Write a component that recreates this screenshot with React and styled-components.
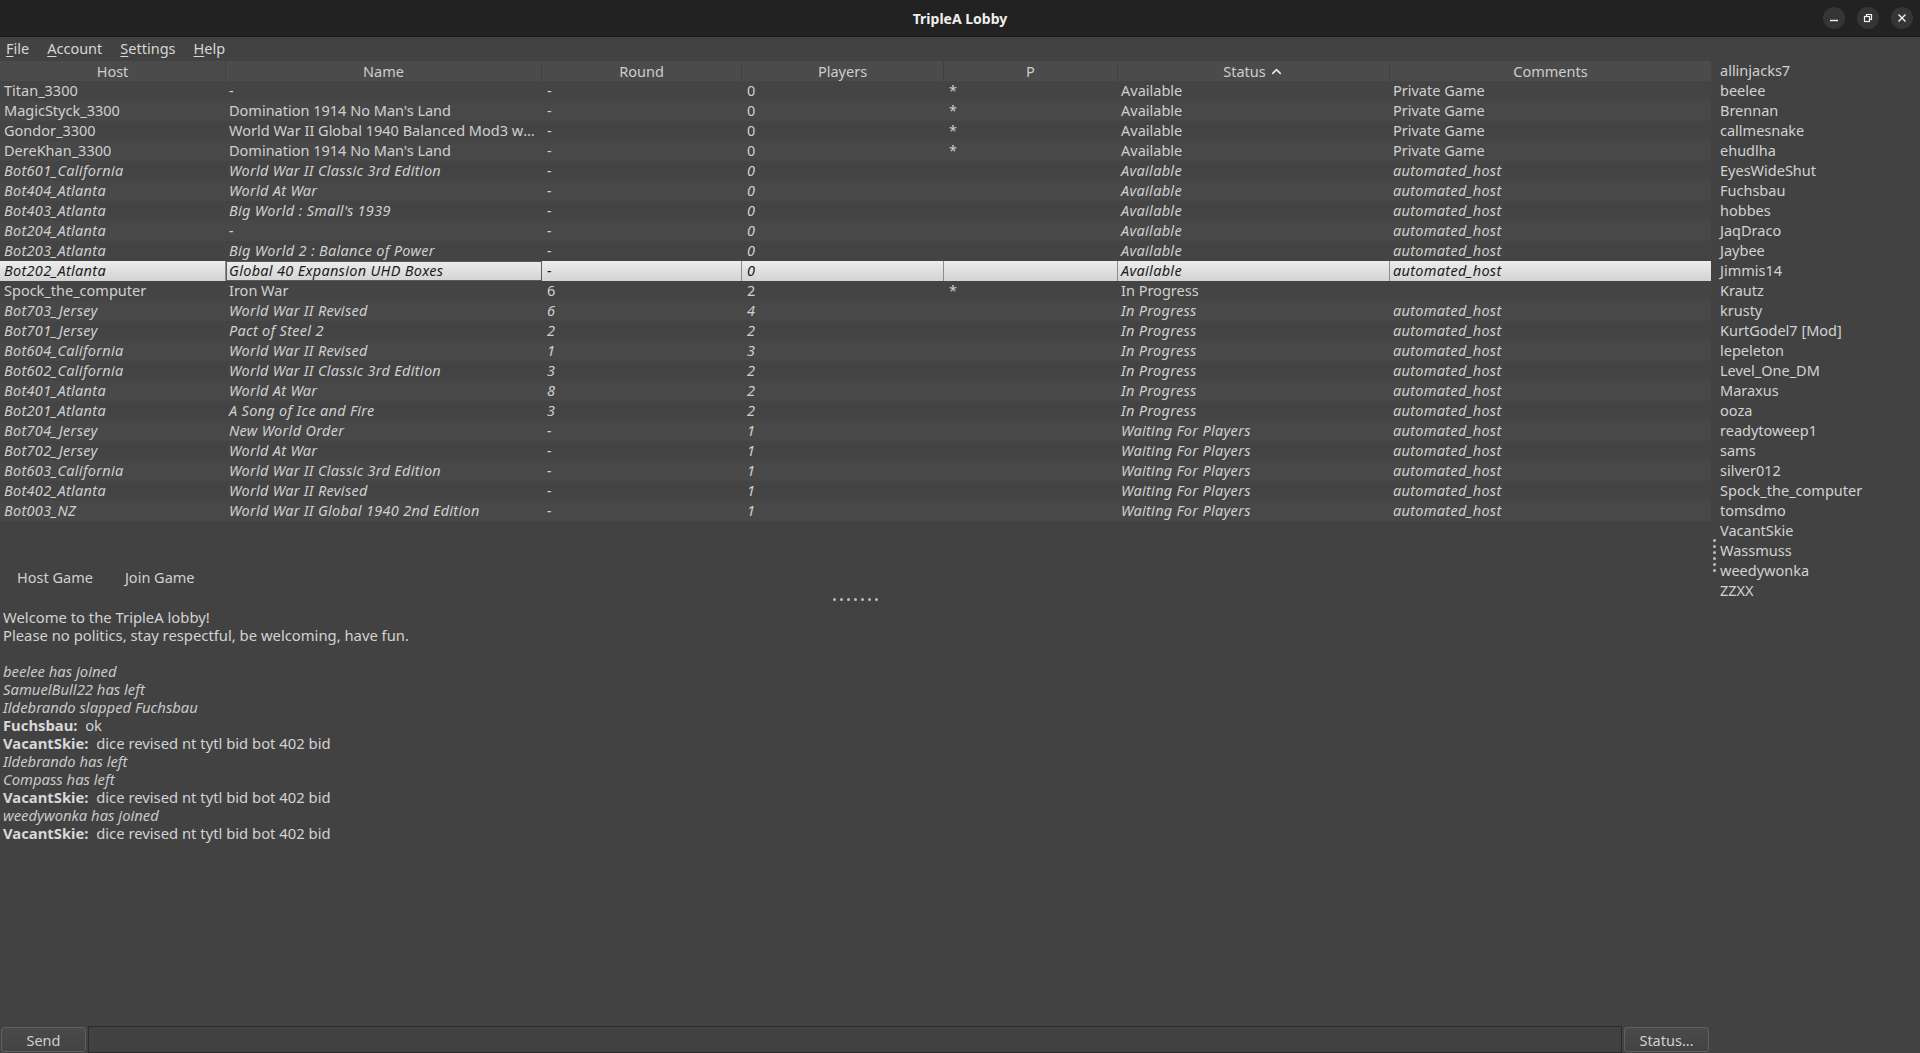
import React from 'react';
import styled, { createGlobalStyle } from 'styled-components';
import { ChevronUp } from 'lucide-react';

const COLS = '226px 316px 200px 202px 174px 272px 321px';

const games = [
  { host: 'Titan_3300', name: '-', round: '-', players: '0', p: '*', status: 'Available', comments: 'Private Game' },
  { host: 'MagicStyck_3300', name: "Domination 1914 No Man's Land", round: '-', players: '0', p: '*', status: 'Available', comments: 'Private Game' },
  { host: 'Gondor_3300', name: 'World War II Global 1940 Balanced Mod3 with Tech', round: '-', players: '0', p: '*', status: 'Available', comments: 'Private Game' },
  { host: 'DereKhan_3300', name: "Domination 1914 No Man's Land", round: '-', players: '0', p: '*', status: 'Available', comments: 'Private Game' },
  { host: 'Bot601_California', name: 'World War II Classic 3rd Edition', round: '-', players: '0', status: 'Available', comments: 'automated_host', bot: true },
  { host: 'Bot404_Atlanta', name: 'World At War', round: '-', players: '0', status: 'Available', comments: 'automated_host', bot: true },
  { host: 'Bot403_Atlanta', name: "Big World : Small's 1939", round: '-', players: '0', status: 'Available', comments: 'automated_host', bot: true },
  { host: 'Bot204_Atlanta', name: '-', round: '-', players: '0', status: 'Available', comments: 'automated_host', bot: true },
  { host: 'Bot203_Atlanta', name: 'Big World 2 : Balance of Power', round: '-', players: '0', status: 'Available', comments: 'automated_host', bot: true },
  { host: 'Bot202_Atlanta', name: 'Global 40 Expansion UHD Boxes', round: '-', players: '0', status: 'Available', comments: 'automated_host', bot: true, selected: true },
  { host: 'Spock_the_computer', name: 'Iron War', round: '6', players: '2', p: '*', status: 'In Progress', comments: '' },
  { host: 'Bot703_Jersey', name: 'World War II Revised', round: '6', players: '4', status: 'In Progress', comments: 'automated_host', bot: true },
  { host: 'Bot701_Jersey', name: 'Pact of Steel 2', round: '2', players: '2', status: 'In Progress', comments: 'automated_host', bot: true },
  { host: 'Bot604_California', name: 'World War II Revised', round: '1', players: '3', status: 'In Progress', comments: 'automated_host', bot: true },
  { host: 'Bot602_California', name: 'World War II Classic 3rd Edition', round: '3', players: '2', status: 'In Progress', comments: 'automated_host', bot: true },
  { host: 'Bot401_Atlanta', name: 'World At War', round: '8', players: '2', status: 'In Progress', comments: 'automated_host', bot: true },
  { host: 'Bot201_Atlanta', name: 'A Song of Ice and Fire', round: '3', players: '2', status: 'In Progress', comments: 'automated_host', bot: true },
  { host: 'Bot704_Jersey', name: 'New World Order', round: '-', players: '1', status: 'Waiting For Players', comments: 'automated_host', bot: true },
  { host: 'Bot702_Jersey', name: 'World At War', round: '-', players: '1', status: 'Waiting For Players', comments: 'automated_host', bot: true },
  { host: 'Bot603_California', name: 'World War II Classic 3rd Edition', round: '-', players: '1', status: 'Waiting For Players', comments: 'automated_host', bot: true },
  { host: 'Bot402_Atlanta', name: 'World War II Revised', round: '-', players: '1', status: 'Waiting For Players', comments: 'automated_host', bot: true },
  { host: 'Bot003_NZ', name: 'World War II Global 1940 2nd Edition', round: '-', players: '1', status: 'Waiting For Players', comments: 'automated_host', bot: true },
];

const users = [
  'allinjacks7', 'beelee', 'Brennan', 'callmesnake', 'ehudlha', 'EyesWideShut', 'Fuchsbau', 'hobbes',
  'JaqDraco', 'Jaybee', 'Jimmis14', 'Krautz', 'krusty', 'KurtGodel7 [Mod]', 'lepeleton', 'Level_One_DM',
  'Maraxus', 'ooza', 'readytoweep1', 'sams', 'silver012', 'Spock_the_computer', 'tomsdmo', 'VacantSkie',
  'Wassmuss', 'weedywonka', 'ZZXX',
];

const chat = [
  { text: 'Welcome to the TripleA lobby!' },
  { text: 'Please no politics, stay respectful, be welcoming, have fun.' },
  { text: '' },
  { text: 'beelee has joined', system: true },
  { text: 'SamuelBull22 has left', system: true },
  { text: 'Ildebrando slapped Fuchsbau', system: true },
  { from: 'Fuchsbau', text: 'ok' },
  { from: 'VacantSkie', text: 'dice revised nt tytl bid bot 402 bid' },
  { text: 'Ildebrando has left', system: true },
  { text: 'Compass has left', system: true },
  { from: 'VacantSkie', text: 'dice revised nt tytl bid bot 402 bid' },
  { text: 'weedywonka has joined', system: true },
  { from: 'VacantSkie', text: 'dice revised nt tytl bid bot 402 bid' },
];

const headers = ['Host', 'Name', 'Round', 'Players', 'P', 'Status', 'Comments'];

const GlobalStyle = createGlobalStyle`
  html, body {
    margin: 0;
    padding: 0;
    background: #424242;
  }
  body {
    font-family: "Noto Sans", "DejaVu Sans", sans-serif;
    font-size: 14.5px;
    color: #d2d2d2;
    overflow: hidden;
  }
`;

const Window = styled.div`
  display: flex;
  flex-direction: column;
  width: 1920px;
  height: 1053px;
  background: #424242;
`;

const TitleBar = styled.div`
  display: grid;
  grid-template-columns: 1fr auto 1fr;
  align-items: center;
  height: 36px;
  background: #222222;
  border-bottom: 1px solid #171717;
  flex-shrink: 0;
`;

const Title = styled.div`
  grid-column: 2;
  font-weight: 700;
  font-size: 14px;
  color: #efefef;
`;

const Controls = styled.div`
  justify-self: end;
  display: flex;
  gap: 12px;
  padding-right: 7px;
`;

const CtrlButton = styled.div`
  width: 22px;
  height: 22px;
  border-radius: 50%;
  background: #353535;
  display: flex;
  align-items: center;
  justify-content: center;
`;

const MenuBar = styled.div`
  display: flex;
  gap: 18px;
  height: 24px;
  align-items: center;
  padding: 0 0 2px 6px;
  box-sizing: border-box;
  flex-shrink: 0;
  color: #d6d6d6;
`;

const MenuItem = styled.span`
  & u {
    text-decoration-thickness: 1px;
    text-underline-offset: 2px;
  }
`;

const Main = styled.div`
  display: flex;
  flex: 1;
  min-height: 0;
`;

const LeftPane = styled.div`
  width: 1711px;
  display: flex;
  flex-direction: column;
  flex-shrink: 0;
`;

const TopPane = styled.div`
  height: 532px;
  display: flex;
  flex-direction: column;
`;

const Table = styled.div`
  flex: 1;
  overflow: hidden;
`;

const HeaderRow = styled.div`
  display: grid;
  grid-template-columns: ${COLS};
  height: 20px;
  background: #4b4b4b;
`;

const HeaderCell = styled.div`
  display: flex;
  align-items: center;
  justify-content: center;
  gap: 3px;
  line-height: 20px;
  color: #cdcdcd;
  border-right: 1px solid #404040;
  &:last-child {
    border-right: 0;
  }
`;

const Row = styled.div`
  display: grid;
  grid-template-columns: ${COLS};
  height: 20px;
  background: ${({ $alt, $selected }) =>
    $selected ? 'linear-gradient(#ececec, #d3d3d3)' : $alt ? '#484848' : '#444444'};
  color: ${({ $selected }) => ($selected ? '#1c1c1c' : '#d0d0d0')};
  font-style: ${({ $bot }) => ($bot ? 'italic' : 'normal')};
  letter-spacing: ${({ $bot }) => ($bot ? '0.3px' : '0')};
`;

const Cell = styled.div`
  padding-left: ${({ $pad }) => $pad || 3}px;
  padding-right: 3px;
  padding-bottom: 1px;
  line-height: 19px;
  white-space: nowrap;
  overflow: hidden;
  text-overflow: ellipsis;
  box-sizing: border-box;
  border-right: 1px solid ${({ $selected }) => ($selected ? '#8d8d8d' : 'transparent')};
  ${({ $focused }) => $focused && 'border: 1px solid #5a5a5a; line-height: 17px; padding-left: 2px;'}
  &:last-child {
    border-right: 0;
  }
`;

const ButtonRow = styled.div`
  display: flex;
  gap: 6px;
  height: 28px;
  margin-bottom: 2px;
  padding-left: 4px;
`;

const FlatButton = styled.button`
  background: transparent;
  border: 0;
  padding: 0 13px;
  font: inherit;
  color: #d0d0d0;
`;

const HSplitHandle = styled.div`
  height: 12px;
  display: flex;
  align-items: center;
  justify-content: center;
  gap: 4px;
  flex-shrink: 0;
`;

const VSplitHandle = styled.div`
  width: 6px;
  display: flex;
  flex-direction: column;
  align-items: center;
  justify-content: flex-start;
  gap: 3px;
  flex-shrink: 0;
  padding-top: 478px;
  box-sizing: border-box;
`;

const Dot = styled.span`
  width: 3px;
  height: 3px;
  border-radius: 50%;
  background: #bdbdbd;
`;

const Chat = styled.div`
  flex: 1;
  padding: 3px 0 0 3px;
  overflow: hidden;
  font-size: 14.8px;
`;

const ChatLine = styled.div`
  line-height: 18px;
  min-height: 18px;
  white-space: pre;
  font-style: ${({ $system }) => ($system ? 'italic' : 'normal')};
  color: ${({ $system }) => ($system ? '#c9c9c9' : '#d2d2d2')};
`;

const Sender = styled.b`
  font-weight: 700;
  color: #d8d8d8;
`;

const BottomBar = styled.div`
  height: 29px;
  display: flex;
  align-items: flex-end;
  gap: 2px;
  padding: 0 2px 1px 1px;
  box-sizing: border-box;
  flex-shrink: 0;
`;

const PushButton = styled.button`
  width: 85px;
  height: 25px;
  border: 1px solid #606060;
  border-radius: 3px;
  background: linear-gradient(#4a4a4a, #434343);
  color: #cfcfcf;
  font: inherit;
  padding: 0;
`;

const Input = styled.div`
  flex: 1;
  height: 27px;
  box-sizing: border-box;
  border: 1px solid #2b2b2b;
  background: #414141;
  margin-bottom: -1px;
`;

const PlayerList = styled.div`
  flex: 1;
  padding-left: 3px;
  color: #d2d2d2;
`;

const Player = styled.div`
  height: 20px;
  line-height: 19px;
  white-space: nowrap;
`;

const MinimizeIcon = () => (
  <svg width="10" height="10" viewBox="0 0 10 10">
    <line x1="1" y1="7.5" x2="9" y2="7.5" stroke="#f2f2f2" strokeWidth="1.4" />
  </svg>
);

const RestoreIcon = () => (
  <svg width="10" height="10" viewBox="0 0 10 10" fill="none" stroke="#f2f2f2" strokeWidth="1.2">
    <rect x="1.5" y="3.5" width="5" height="5" />
    <path d="M3.5 3.5 V1.5 H8.5 V6.5 H6.5" />
  </svg>
);

const CloseIcon = () => (
  <svg width="10" height="10" viewBox="0 0 10 10">
    <path d="M1.5 1.5 L8.5 8.5 M8.5 1.5 L1.5 8.5" stroke="#f2f2f2" strokeWidth="1.4" />
  </svg>
);

const Mnemonic = ({ label }) => (
  <MenuItem>
    <u>{label[0]}</u>
    {label.slice(1)}
  </MenuItem>
);

const GameRow = ({ game, index }) => {
  const sel = !!game.selected;
  const values = [game.host, game.name, game.round, game.players, game.p || '', game.status, game.comments];
  const pads = [4, 3, 5, 5, 5, 3, 3];
  return (
    <Row $alt={index % 2 === 1} $selected={sel} $bot={game.bot}>
      {values.map((v, i) => (
        <Cell key={i} $pad={pads[i]} $selected={sel} $focused={sel && i === 1}>
          {v}
        </Cell>
      ))}
    </Row>
  );
};

const dots = (n) => Array.from({ length: n }, (_, i) => <Dot key={i} />);

const App = () => (
  <>
    <GlobalStyle />
    <Window>
      <TitleBar>
        <Title>TripleA Lobby</Title>
        <Controls>
          <CtrlButton><MinimizeIcon /></CtrlButton>
          <CtrlButton><RestoreIcon /></CtrlButton>
          <CtrlButton><CloseIcon /></CtrlButton>
        </Controls>
      </TitleBar>
      <MenuBar>
        <Mnemonic label="File" />
        <Mnemonic label="Account" />
        <Mnemonic label="Settings" />
        <Mnemonic label="Help" />
      </MenuBar>
      <Main>
        <LeftPane>
          <TopPane>
            <Table>
              <HeaderRow>
                {headers.map((h) => (
                  <HeaderCell key={h}>
                    {h}
                    {h === 'Status' && <ChevronUp size={15} strokeWidth={2.6} color="#e6e6e6" />}
                  </HeaderCell>
                ))}
              </HeaderRow>
              {games.map((g, i) => (
                <GameRow key={g.host} game={g} index={i} />
              ))}
            </Table>
            <ButtonRow>
              <FlatButton>Host Game</FlatButton>
              <FlatButton>Join Game</FlatButton>
            </ButtonRow>
          </TopPane>
          <HSplitHandle>{dots(7)}</HSplitHandle>
          <Chat>
            {chat.map((m, i) => (
              <ChatLine key={i} $system={m.system}>
                {m.from && <Sender>{m.from}:</Sender>}
                {m.from ? `  ${m.text}` : m.text}
              </ChatLine>
            ))}
          </Chat>
          <BottomBar>
            <PushButton>Send</PushButton>
            <Input />
            <PushButton>Status...</PushButton>
          </BottomBar>
        </LeftPane>
        <VSplitHandle>{dots(6)}</VSplitHandle>
        <PlayerList>
          {users.map((u) => (
            <Player key={u}>{u}</Player>
          ))}
        </PlayerList>
      </Main>
    </Window>
  </>
);

export default App;
